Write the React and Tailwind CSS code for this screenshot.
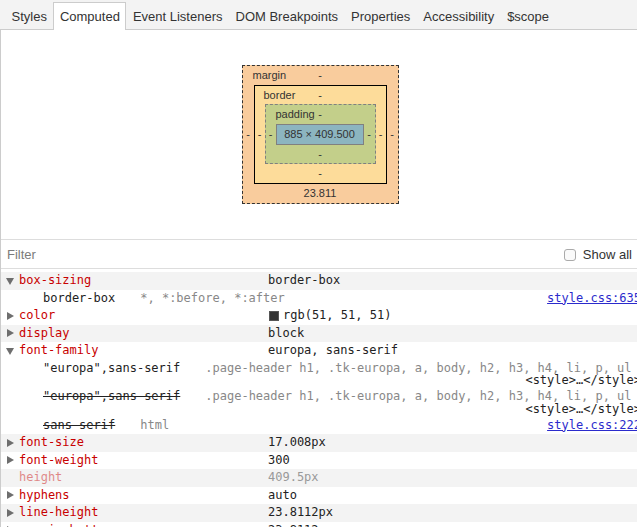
import React from 'react';

const tabs = ['Styles', 'Computed', 'Event Listeners', 'DOM Breakpoints', 'Properties', 'Accessibility', '$scope'];

function Arrow({ open }) {
  return (
    <svg width="8" height="8" viewBox="0 0 8 8" className="fill-[#6e6e6e]">
      {open ? <polygon points="0,1 8,1 4,8" /> : <polygon points="1,0 8,4 1,8" />}
    </svg>
  );
}

function Prop({ name, value, arrow, open, gray, faded, swatch }) {
  return (
    <div className={`flex items-center h-[17.5px] pl-[5px] ${gray ? 'bg-[#f3f3f3]' : ''}`}>
      <span className="w-[13px] flex items-center">{arrow && <Arrow open={open} />}</span>
      <span className={`w-[249px] ${faded ? 'text-[#c80000]/45' : 'text-[#c80000]'}`}>{name}</span>
      {swatch && <span className="w-[10px] h-[10px] bg-[#333] border border-[#555] ml-px mr-[4px]" />}
      <span className={faded ? 'text-[#999]' : 'text-[#222]'}>{value}</span>
    </div>
  );
}

function Trace({ value, selector, link, source, struck }) {
  return (
    <div className="pl-[42px] py-[2px] pr-0">
      <div className="flex h-[13.5px] items-center whitespace-nowrap">
        <span className={`text-[#222] ${struck ? 'line-through' : ''}`}>{value}</span>
        <span className="ml-[25px] text-[#888]">{selector}</span>
        {link && <span className="ml-auto text-[#2b2bcc] underline">{link}</span>}
      </div>
      {source && <div className="h-[11px] leading-[11px] text-right text-[#222]">{source}</div>}
    </div>
  );
}

export default function App() {
  return (
    <div className="w-[637px] h-[527px] overflow-hidden bg-white font-['Liberation_Sans',Arial,sans-serif]">
      {/* Tab strip */}
      <div className="flex items-end h-[30px] border-b border-[#ccc] bg-[#f3f3f3] pl-[5px]">
        {tabs.map((t) => (
          <div
            key={t}
            className={`h-[28px] -mb-px flex items-center px-[5.5px] border border-b-0 text-[13px] text-[#333] ${
              t === 'Computed' ? 'bg-white border-[#ccc]' : 'border-transparent'
            }`}
          >
            {t}
          </div>
        ))}
      </div>

      <div className="border-l border-[#ccc]">
        {/* Box model */}
        <div className="h-[209px] flex justify-center pt-[35px] pl-[2px] text-[11px] text-[#333]">
          <div className="h-fit border border-dashed border-[#333] bg-[#f9cc9d]">
            <div className="relative h-[19px] flex items-center justify-center">
              <span className="absolute left-[10px]">margin</span>-
            </div>
            <div className="flex items-center">
              <span className="w-[11px] text-center">-</span>
              <div className="border border-black bg-[#fddc9a]">
                <div className="relative h-[18px] flex items-center justify-center">
                  <span className="absolute left-[9px]">border</span>-
                </div>
                <div className="flex items-center">
                  <span className="w-[10px] text-center">-</span>
                  <div className="border border-dashed border-[#808080] bg-[#c3cf8a]">
                    <div className="relative h-[19px] flex items-center justify-center">
                      <span className="absolute left-[10px]">padding</span>-
                    </div>
                    <div className="flex items-center">
                      <span className="w-[10px] text-center">-</span>
                      <div className="w-[88px] h-[21px] border border-[#808080] bg-[#8cb5c0] flex items-center justify-center">
                        885 × 409.500
                      </div>
                      <span className="w-[11px] text-center">-</span>
                    </div>
                    <div className="h-[18px] flex items-center justify-center">-</div>
                  </div>
                  <span className="w-[10px] text-center">-</span>
                </div>
                <div className="h-[19px] flex items-center justify-center">-</div>
              </div>
              <span className="w-[11px] text-center">-</span>
            </div>
            <div className="h-[19px] flex items-center justify-center">23.811</div>
          </div>
        </div>

        {/* Filter bar */}
        <div className="h-[30px] border-y border-[#ddd] flex items-center pt-px pl-[6px] pr-[5px] text-[13px]">
          <span className="text-[#7b7b7b]">Filter</span>
          <span className="ml-auto w-[12px] h-[12px] rounded-[3px] border border-[#aaa] bg-[#fafafa]" />
          <span className="ml-[7px] text-[#333]">Show all</span>
        </div>

        {/* Computed properties */}
        <div className="w-[640px] pt-[3px] font-['DejaVu_Sans_Mono',monospace] text-[12px] leading-[13.5px]">
          <Prop name="box-sizing" value="border-box" arrow open gray />
          <Trace value="border-box" selector="*, *:before, *:after" link="style.css:635" />
          <Prop name="color" value="rgb(51, 51, 51)" arrow swatch />
          <Prop name="display" value="block" arrow gray />
          <Prop name="font-family" value="europa, sans-serif" arrow open />
          <Trace
            value={'"europa",sans-serif'}
            selector=".page-header h1, .tk-europa, a, body, h2, h3, h4, li, p, ul"
            source="<style>…</style>"
          />
          <Trace
            value={'"europa",sans-serif'}
            selector=".page-header h1, .tk-europa, a, body, h2, h3, h4, li, p, ul"
            source="<style>…</style>"
            struck
          />
          <Trace value="sans-serif" selector="html" link="style.css:222" struck />
          <Prop name="font-size" value="17.008px" arrow gray />
          <Prop name="font-weight" value="300" arrow />
          <Prop name="height" value="409.5px" gray faded />
          <Prop name="hyphens" value="auto" arrow />
          <Prop name="line-height" value="23.8112px" arrow gray />
          <Prop name="margin-bottom" value="23.8112px" arrow />
        </div>
      </div>
    </div>
  );
}
